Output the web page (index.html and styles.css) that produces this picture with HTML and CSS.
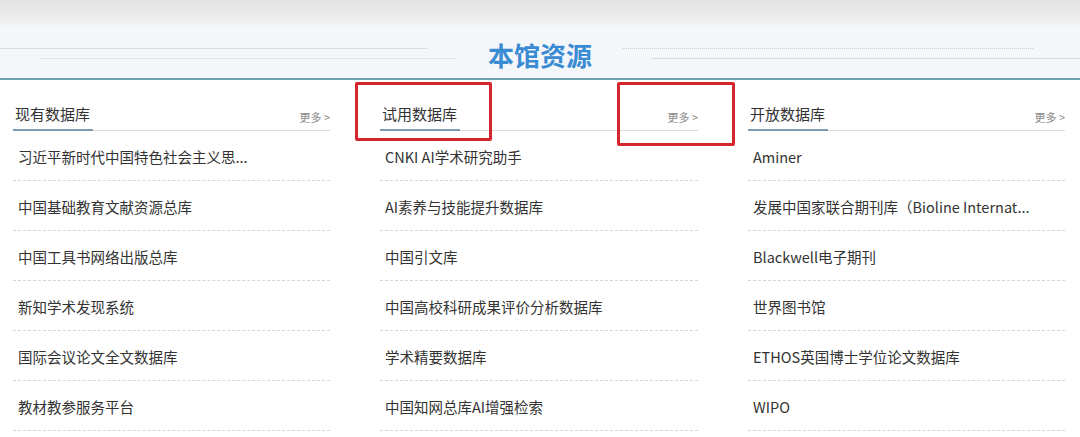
FILE: index.html
```html
<!DOCTYPE html>
<html lang="zh-CN">
<head>
<meta charset="utf-8">
<title>本馆资源</title>
<link rel="stylesheet" href="styles.css">
</head>
<body>
<div class="page">
  <div class="topband"></div>
  <div class="titleband">
    <div class="deco deco-left">
      <div class="ln solid l1"></div>
      <div class="ln dotted l2"></div>
    </div>
    <h1 class="title">本馆资源</h1>
    <div class="deco deco-right">
      <div class="ln dotted r1"></div>
      <div class="ln solid r2"></div>
    </div>
  </div>
  <div class="columns">
    <section class="col">
      <div class="col-head"><span class="col-title">现有数据库</span><a class="more">更多 &gt;</a></div>
      <ul class="list">
        <li>习近平新时代中国特色社会主义思...</li>
        <li>中国基础教育文献资源总库</li>
        <li>中国工具书网络出版总库</li>
        <li>新知学术发现系统</li>
        <li>国际会议论文全文数据库</li>
        <li>教材教参服务平台</li>
      </ul>
    </section>
    <section class="col">
      <div class="col-head"><span class="col-title">试用数据库</span><a class="more">更多 &gt;</a></div>
      <ul class="list">
        <li>CNKI AI学术研究助手</li>
        <li>AI素养与技能提升数据库</li>
        <li>中国引文库</li>
        <li>中国高校科研成果评价分析数据库</li>
        <li>学术精要数据库</li>
        <li>中国知网总库AI增强检索</li>
      </ul>
    </section>
    <section class="col">
      <div class="col-head"><span class="col-title">开放数据库</span><a class="more">更多 &gt;</a></div>
      <ul class="list">
        <li>Aminer</li>
        <li>发展中国家联合期刊库（Bioline Internat...</li>
        <li>Blackwell电子期刊</li>
        <li>世界图书馆</li>
        <li>ETHOS英国博士学位论文数据库</li>
        <li>WIPO</li>
      </ul>
    </section>
  </div>
  <div class="mark mark-1"></div>
  <div class="mark mark-2"></div>
</div>
</body>
</html>
```

FILE: styles.css
```css
* { box-sizing: border-box; }
html, body { margin: 0; padding: 0; background: #ffffff; }
body {
  font-family: "Noto Sans CJK SC", "Microsoft YaHei", sans-serif;
  color: #333333;
  width: 1080px;
  height: 437px;
  overflow: hidden;
}
.page { position: relative; width: 1080px; height: 437px; }

.topband {
  height: 25px;
  background: linear-gradient(180deg, #e4e4e4 0%, #ececec 70%, #f0f2f4 100%);
}

.titleband {
  height: 55px;
  display: flex;
  background: #f3f7fa;
  border-bottom: 2px solid #6f9fb3;
}
.deco {
  flex: 1;
  display: flex;
  flex-direction: column;
  padding-top: 23px;
  gap: 9px;
}
.ln { height: 1px; }
.ln.solid { background: #d3dde7; }
.ln.dotted { border-top: 1px dotted #c4cfdb; }
.l1 { margin-right: 51px; }
.l2 { margin-left: 41px; margin-right: 23px; }
.r1 { margin-left: 21px; margin-right: 47px; }
.r2 { margin-left: 49px; }

.title {
  margin: 0 10px;
  padding-top: 8px;
  font-size: 26px;
  line-height: 44px;
  font-weight: 700;
  color: #3a8bd3;
  letter-spacing: 0;
}

.columns {
  display: grid;
  grid-template-columns: 317px 318px 317px;
  column-gap: 50px;
  padding-left: 13px;
}
.col-head {
  height: 51px;
  display: flex;
  justify-content: space-between;
  align-items: flex-end;
  border-bottom: 1px solid #dcdcdc;
}
.col-title {
  font-size: 15px;
  line-height: 20px;
  padding: 0 3px 5px 2px;
  border-bottom: 2px solid #7b9cb7;
  margin-bottom: -1px;
  color: #333333;
}
.more {
  font-size: 11px;
  line-height: 14px;
  padding-bottom: 6px;
  color: #8a8a8a;
}

.list { list-style: none; margin: 0; padding: 0; }
.list li {
  height: 50px;
  padding: 2px 0 0 5px;
  line-height: 47px;
  font-size: 14.5px;
  color: #333333;
  white-space: nowrap;
  overflow: hidden;
  border-bottom: 1px dashed #d6d6d6;
}

.mark {
  position: absolute;
  border: 3px solid #d4262c;
  border-radius: 2px;
}
.mark-1 { left: 355px; top: 82px; width: 137px; height: 59px; }
.mark-2 { left: 617px; top: 82px; width: 118px; height: 64px; }
```
